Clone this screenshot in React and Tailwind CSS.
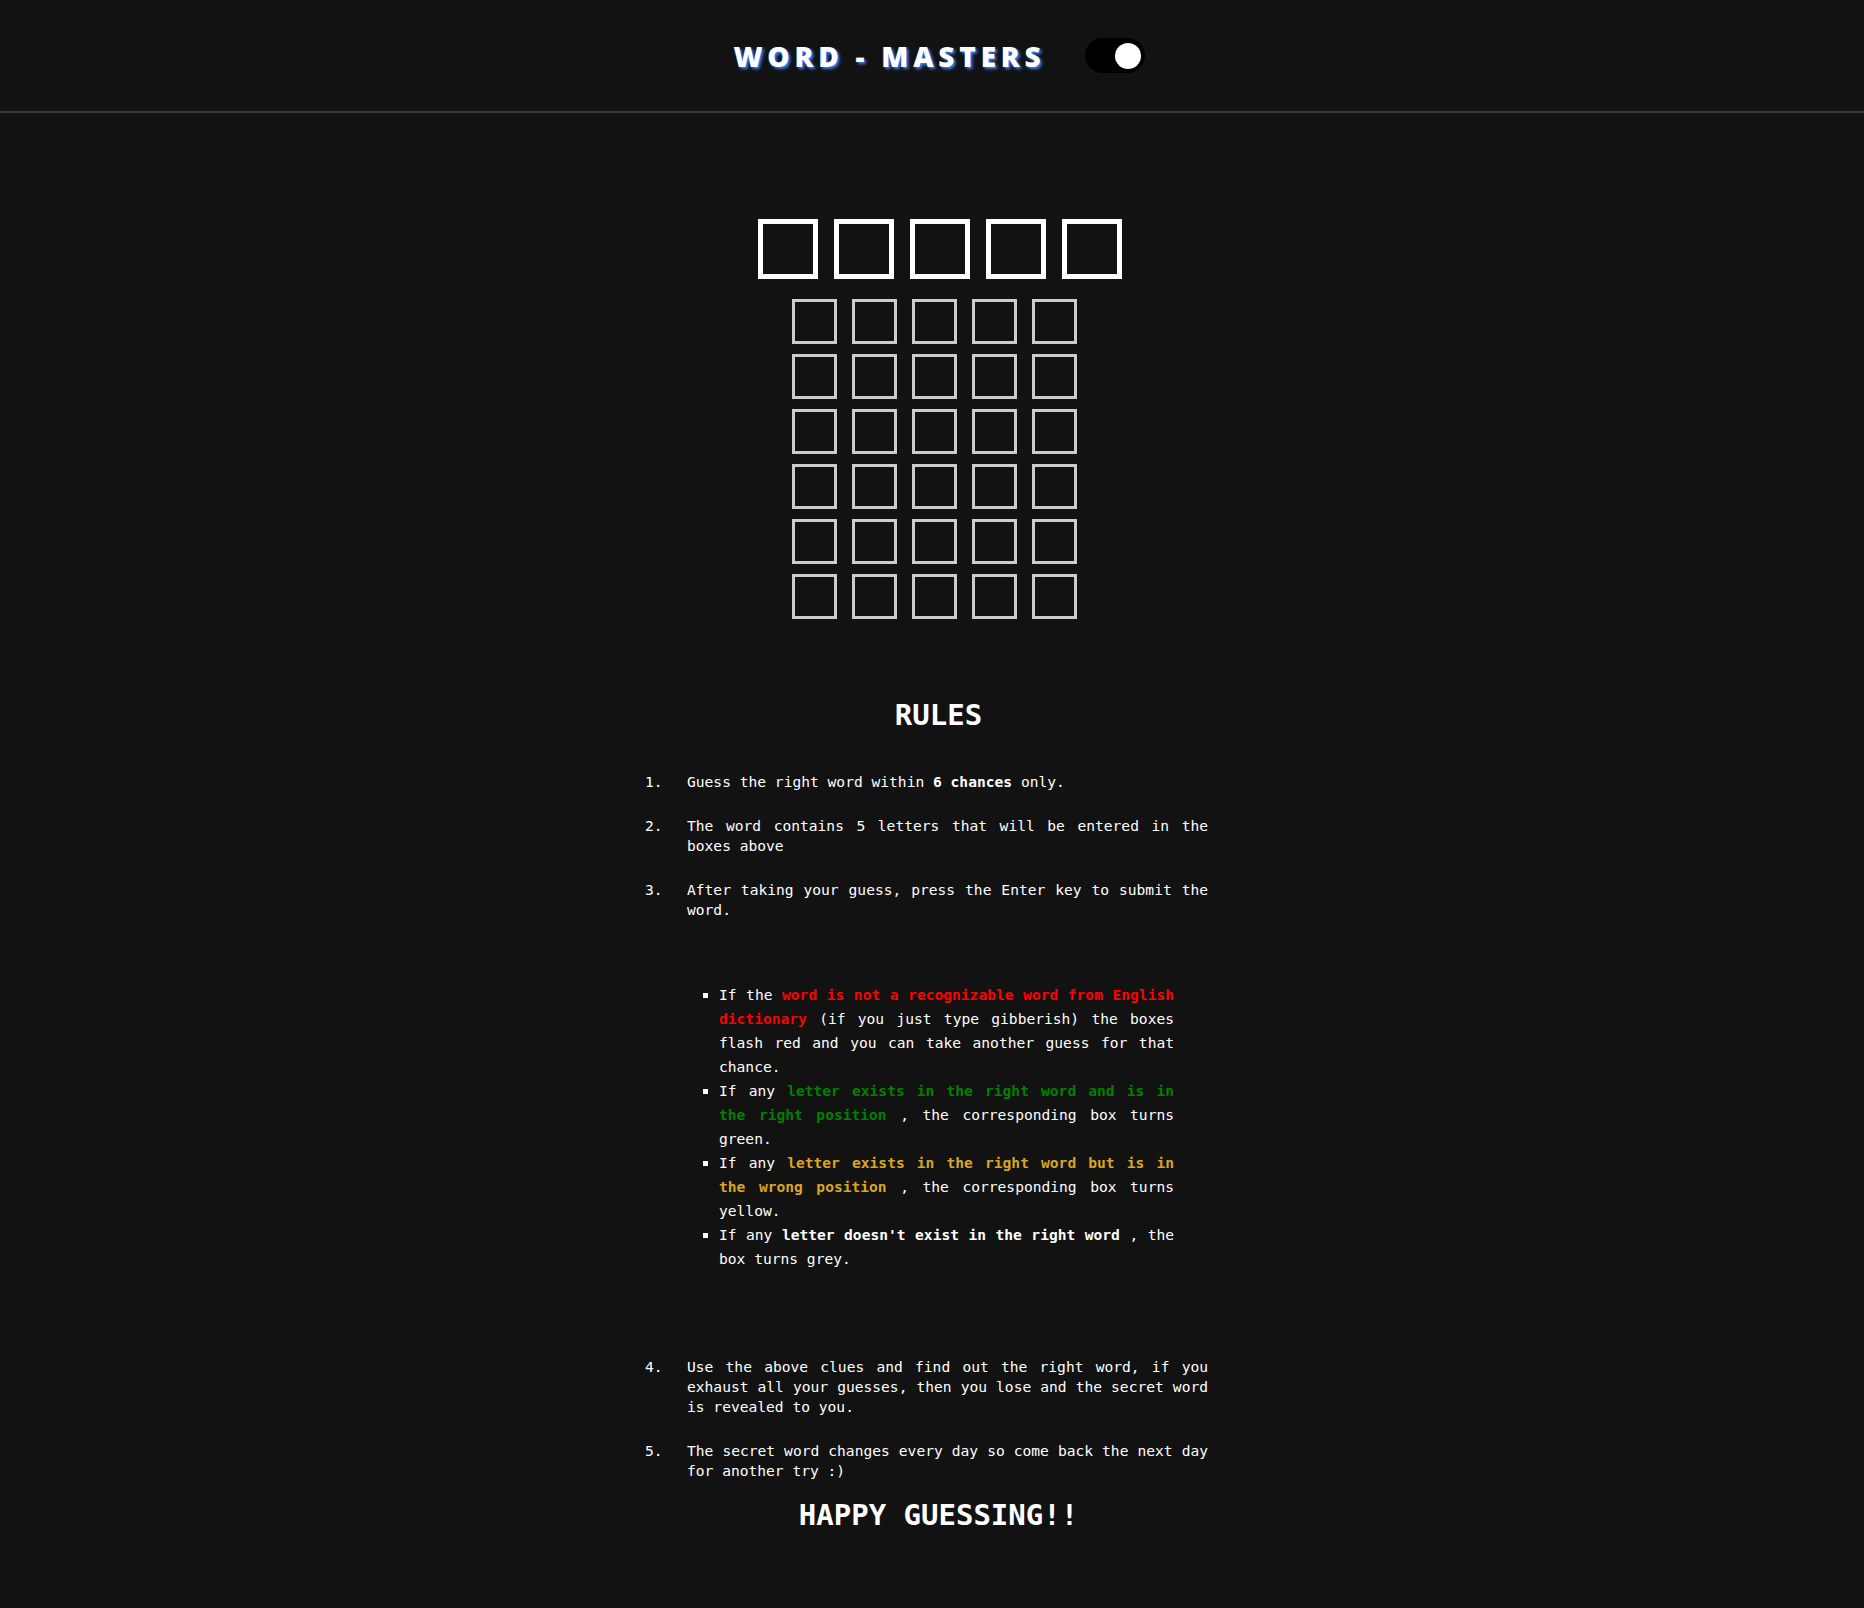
import React, { useState } from "react";

const Box = ({ big }) =>
  big ? (
    <div className="w-[60px] h-[60px] border-[5px] border-white"></div>
  ) : (
    <div className="w-[45px] h-[45px] border-[3px] border-[#cccccc]"></div>
  );

const Item = ({ n, children }) => (
  <div className="flex">
    <span className="w-[42px] shrink-0">{n}.</span>
    <div className="w-[521px] text-justify">{children}</div>
  </div>
);

const Bullet = ({ children }) => (
  <div className="flex">
    <span className="w-[16px] h-[24px] shrink-0 flex items-center">
      <span className="block w-[5px] h-[5px] bg-white"></span>
    </span>
    <div className="w-[455px] text-justify">{children}</div>
  </div>
);

const App = () => {
  const [dark, setDark] = useState(true);
  const rows = [0, 1, 2, 3, 4, 5];
  const cols = [0, 1, 2, 3, 4];

  return (
    <div className="min-h-screen w-full bg-[#121212] text-white font-['DejaVu_Sans_Mono',monospace]">
      <header className="h-[113px] border-b-2 border-[#3a3a3a] flex items-center justify-center">
        <div className="ml-[14px] flex items-center gap-[39px]">
          <h1 className="font-['Open_Sans',sans-serif] font-extrabold text-[28px] tracking-[4.8px] text-white [text-shadow:2px_2px_3px_#3b82f6]">
            WORD - MASTERS
          </h1>
          <button
            onClick={() => setDark(!dark)}
            className="w-[60px] h-[35px] rounded-full bg-black flex items-center justify-end pr-[4px]"
          >
            <span className="block w-[26px] h-[26px] rounded-full bg-white"></span>
          </button>
        </div>
      </header>

      <main className="flex flex-col items-center">
        <div className="mt-[106px] ml-[16px] flex gap-[16px]">
          {cols.map((c) => (
            <Box big key={c} />
          ))}
        </div>

        <div className="mt-[20px] ml-[5px] flex flex-col gap-[10px]">
          {rows.map((r) => (
            <div key={r} className="flex gap-[15px]">
              {cols.map((c) => (
                <Box key={c} />
              ))}
            </div>
          ))}
        </div>

        <h2 className="mt-[82px] ml-[13px] text-[29px] leading-[29px] font-bold">RULES</h2>

        <div className="mt-[42px] mr-[11px] w-[563px] text-[14.6px]">
          <div className="flex flex-col gap-[24px] leading-[20px]">
            <Item n={1}>
              Guess the right word within <b>6 chances</b> only.
            </Item>
            <Item n={2}>The word contains 5 letters that will be entered in the boxes above</Item>
            <Item n={3}>After taking your guess, press the Enter key to submit the word.</Item>
          </div>

          <div className="mt-[63px] ml-[58px] leading-[24px]">
            <Bullet>
              If the{" "}
              <b className="text-[#ff0000]">word is not a recognizable word from English dictionary</b>{" "}
              (if you just type gibberish) the boxes flash red and you can take another guess for that
              chance.
            </Bullet>
            <Bullet>
              If any{" "}
              <b className="text-[#008000]">letter exists in the right word and is in the right position</b>{" "}
              , the corresponding box turns green.
            </Bullet>
            <Bullet>
              If any{" "}
              <b className="text-[#daa520]">letter exists in the right word but is in the wrong position</b>{" "}
              , the corresponding box turns yellow.
            </Bullet>
            <Bullet>
              If any <b>letter doesn't exist in the right word</b> , the box turns grey.
            </Bullet>
          </div>

          <div className="mt-[86px] flex flex-col gap-[24px] leading-[20px]">
            <Item n={4}>
              Use the above clues and find out the right word, if you exhaust all your guesses, then you
              lose and the secret word is revealed to you.
            </Item>
            <Item n={5}>
              The secret word changes every day so come back the next day for another try :)
            </Item>
          </div>
        </div>

        <h2 className="mt-[20px] ml-[13px] text-[29px] leading-[29px] font-bold">HAPPY GUESSING!!</h2>
      </main>
    </div>
  );
};

export default App;
